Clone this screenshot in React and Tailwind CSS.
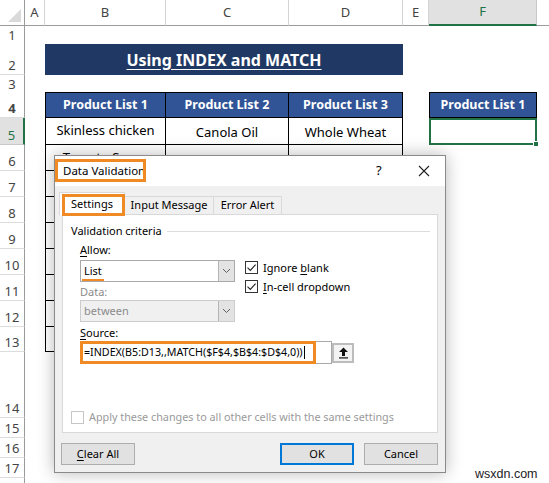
import React from 'react';

const GRID = 'grid grid-cols-[25px_20px_121px_123px_114px_26px_108px_1fr]';
const ORANGE = 'border-[#F08A24]';

const RowHead = ({ n, active }) => (
  <div
    className={
      active
        ? 'flex items-end justify-center border-r-2 border-b border-r-[#217346] border-b-[#c8c8c8] bg-[#e1e1e1] text-[#217346]'
        : 'flex items-end justify-center border-r border-b border-r-[#9b9b9b] border-b-[#dcdcdc] bg-white text-[#444]'
    }
  >
    {n && <span className="h-[18px] text-[13px] leading-[18px]">{n}</span>}
  </div>
);

const ColHead = ({ label, active }) => (
  <div
    className={
      active
        ? 'flex items-center justify-center border-r border-b-2 border-r-[#c8c8c8] border-b-[#217346] bg-[#e1e1e1] text-[#217346]'
        : 'flex items-center justify-center border-r border-b border-r-[#d4d4d4] border-b-[#9b9b9b] bg-white text-[#444]'
    }
  >
    {label}
  </div>
);

const CheckBox = ({ checked, disabled }) => (
  <span
    className={`flex h-[13px] w-[13px] shrink-0 items-center justify-center border bg-white ${
      disabled ? 'border-[#c6c6c6]' : 'border-[#333]'
    }`}
  >
    {checked && (
      <svg width="11" height="11" viewBox="0 0 11 11">
        <path d="M1.5 5.6 L4.3 8.4 L9.6 2.6" fill="none" stroke="#222" strokeWidth="1.1" />
      </svg>
    )}
  </span>
);

const Select = ({ value, disabled, mark }) => (
  <div
    className={`relative flex h-[22px] w-[155px] border ${
      disabled ? 'border-[#cccccc] bg-[#f0f0f0] text-[#8b8b8b]' : 'border-[#a9a9a9] bg-white text-black'
    }`}
  >
    <span className="flex-1 pl-[3px] leading-[20px]">{value}</span>
    {mark && <span className="absolute left-[1px] top-[18px] h-[2px] w-[22px] bg-[#F08A24]" />}
    <span className="flex w-[16px] items-center justify-center border-l border-[#b4b4b4] bg-[#e3e3e3]">
      <svg width="9" height="6" viewBox="0 0 9 6">
        <path d="M1 1 L4.5 4.5 L8 1" fill="none" stroke="#606060" />
      </svg>
    </span>
  </div>
);

const U = ({ children }) => <span className="underline underline-offset-2">{children}</span>;

const Sheet = () => {
  const lower = [6, 7, 8, 9, 10, 11, 12, 13];
  const tail = [15, 16, 17];

  return (
    <div className="font-['Noto_Sans',sans-serif]">
      {/* column headers */}
      <div className={`${GRID} h-[26px] text-[13px]`}>
        <div className="relative border-r border-b border-r-[#9b9b9b] border-b-[#9b9b9b] bg-white">
          <svg className="absolute right-[3px] bottom-[3px]" width="13" height="13" viewBox="0 0 13 13">
            <polygon points="13,0 13,13 0,13" fill="#dadada" />
          </svg>
        </div>
        <ColHead label="A" />
        <ColHead label="B" />
        <ColHead label="C" />
        <ColHead label="D" />
        <ColHead label="E" />
        <ColHead label="F" active />
        <div className="border-b border-b-[#9b9b9b] bg-white" />
      </div>

      {/* 1 */}
      <div className={`${GRID} h-[18px]`}>
        <RowHead n={1} />
      </div>

      {/* 2 - title */}
      <div className={`${GRID} h-[31px]`}>
        <RowHead n={2} />
        <div />
        <div className="col-span-3 flex items-center justify-center bg-[#203864] text-[16px] font-bold text-white">
          <span className="underline underline-offset-[3px]">Using INDEX and MATCH</span>
        </div>
      </div>

      {/* 3 */}
      <div className={`${GRID} h-[17px]`}>
        <RowHead n={3} />
      </div>

      {/* 4 - headers */}
      <div className={`${GRID} h-[26px] text-[12.5px] font-bold text-white`}>
        <RowHead n={4} />
        <div />
        <div className="flex items-center justify-center border border-black bg-[#305496]">Product List 1</div>
        <div className="flex items-center justify-center border-t border-r border-b border-black bg-[#305496]">Product List 2</div>
        <div className="flex items-center justify-center border-t border-r border-b border-black bg-[#305496]">Product List 3</div>
        <div />
        <div className="flex items-center justify-center border border-black bg-[#305496]">Product List 1</div>
      </div>

      {/* 5 */}
      <div className={`${GRID} h-[27px] text-[13px] text-black`}>
        <RowHead n={5} active />
        <div />
        <div className="flex items-center justify-center border-r border-b border-l border-black">Skinless chicken</div>
        <div className="flex items-end justify-center border-r border-b border-black pb-[2px]">Canola Oil</div>
        <div className="flex items-end justify-center border-r border-b border-black pb-[2px]">Whole Wheat</div>
        <div />
        <div className="relative border-2 border-[#217346]">
          <span className="absolute -right-[4px] -bottom-[4px] h-[6px] w-[6px] border border-white bg-[#217346]" />
        </div>
      </div>

      {lower.map((n) => (
        <div key={n} className={`${GRID} ${n === 13 ? 'h-[25px]' : 'h-[26px]'} text-[13px] text-black`}>
          <RowHead n={n} />
          <div />
          <div className="flex items-center justify-center border-r border-b border-l border-black">
            {n === 6 ? 'Tomato Sauce' : ''}
          </div>
          <div className="border-r border-b border-black" />
          <div className="border-r border-b border-black" />
        </div>
      ))}

      <div className={`${GRID} h-[66px]`}>
        <RowHead n={14} />
      </div>

      {tail.map((n) => (
        <div key={n} className={`${GRID} h-[20px]`}>
          <RowHead n={n} />
        </div>
      ))}
      <div className={`${GRID} h-[20px]`}>
        <RowHead />
      </div>
    </div>
  );
};

const Dialog = () => (
  <div className="absolute left-[54px] top-[155px] flex h-[318px] w-[392px] flex-col border border-[#8a8a8a] font-['Noto_Sans',sans-serif] text-[11px] text-black shadow-[0_0_16px_rgba(0,0,0,0.28)]">
    {/* title bar */}
    <div className="relative flex h-[30px] shrink-0 items-center bg-white">
      <span className="pl-[8px] text-[11.5px]">Data Validation</span>
      <span className={`absolute left-[0px] top-[3px] h-[23px] w-[91px] border-[3px] ${ORANGE}`} />
      <span className="absolute left-[321px] top-[5px] text-[13px]">?</span>
      <svg className="absolute left-[363px] top-[9px]" width="12" height="12" viewBox="0 0 12 12">
        <path d="M1 1 L11 11 M11 1 L1 11" stroke="#222" strokeWidth="1.1" />
      </svg>
    </div>

    {/* body */}
    <div className="flex flex-1 flex-col bg-[#f0f0f0] px-[7px] pt-[6px]">
      <div className="-ml-[3px] flex h-[22px] items-end">
        <div className="relative z-10 -mb-px flex h-[23px] w-[66px] items-center justify-center border border-b-0 border-[#d9d9d9] bg-white">
          Settings
          <span className={`absolute left-[2px] top-[1px] h-[22px] w-[63px] border-[3px] ${ORANGE}`} />
        </div>
        <div className="flex h-[18px] w-[89px] items-center justify-center border-t border-r border-[#d9d9d9] bg-[#f0f0f0]">
          Input Message
        </div>
        <div className="flex h-[18px] w-[68px] items-center justify-center border-t border-r border-[#d9d9d9] bg-[#f0f0f0]">
          Error Alert
        </div>
      </div>

      {/* panel */}
      <div className="flex h-[219px] flex-col border border-[#d9d9d9] bg-white">
        <div className="mt-[8px] flex h-[16px] items-center pr-[7px] pl-[8px]">
          <span>Validation criteria</span>
          <span className="ml-[5px] h-px flex-1 bg-[#dcdcdc]" />
        </div>

        <div className="flex flex-col pl-[17px]">
          <div className="mt-[3px] flex h-[16px] items-center">
            <span>
              <U>A</U>llow:
            </span>
          </div>

          <div className="mt-[2px] flex items-start">
            <div className="flex flex-col">
              <Select value="List" mark />
              <div className="mt-[2px] flex h-[16px] items-center text-[#8b8b8b]">Data:</div>
              <Select value="between" disabled />
            </div>
            <div className="mt-[1px] ml-[10px] flex flex-col gap-[6px]">
              <div className="flex h-[13px] items-center gap-[5px] leading-[13px]">
                <CheckBox checked />
                <span>
                  Ignore <U>b</U>lank
                </span>
              </div>
              <div className="flex h-[13px] items-center gap-[5px] leading-[13px]">
                <CheckBox checked />
                <span>
                  <U>I</U>n-cell dropdown
                </span>
              </div>
            </div>
          </div>

          <div className="mt-[3px] flex h-[16px] items-center">
            <span>
              <U>S</U>ource:
            </span>
          </div>

          <div className="flex items-center">
            <div className="relative flex h-[23px] w-[252px] items-center border border-[#a9a9a9] bg-white">
              <span className="pl-[3px] text-[10.7px]">=INDEX(B5:D13,,MATCH($F$4,$B$4:$D$4,0))</span>
              <span className="ml-px h-[13px] w-px bg-black" />
              <span className={`absolute -left-px -top-px h-[23px] w-[236px] border-[3px] ${ORANGE}`} />
            </div>
            <div className="flex h-[20px] w-[22px] items-center justify-center border-2 border-[#bcbcbc] bg-[#f3f3f3]">
              <svg width="11" height="12" viewBox="0 0 11 12">
                <polygon points="5.5,0.5 10,5 7,5 7,9 4,9 4,5 1,5" fill="#111" />
                <rect x="1" y="10.3" width="9" height="1.2" fill="#111" />
              </svg>
            </div>
          </div>
        </div>

        <div className="mt-[45px] flex h-[16px] items-center gap-[5px] pl-[8px] text-[10.8px] text-[#9a9a9a]">
          <CheckBox disabled />
          <span>Apply these changes to all other cells with the same settings</span>
        </div>
      </div>

      {/* buttons */}
      <div className="mt-[10px] flex h-[22px] items-center">
        <div className="-ml-px flex h-[22px] w-[74px] items-center justify-center border border-[#adadad] bg-[#e1e1e1]">
          <span>
            <U>C</U>lear All
          </span>
        </div>
        <div className="ml-auto flex h-[22px] w-[74px] items-center justify-center border-2 border-[#0078d7] bg-[#e1e1e1]">
          OK
        </div>
        <div className="ml-[10px] flex h-[22px] w-[74px] items-center justify-center border border-[#adadad] bg-[#e1e1e1]">
          Cancel
        </div>
      </div>
    </div>
  </div>
);

const App = () => {
  return (
    <div className="relative h-[483px] w-[549px] overflow-hidden bg-white">
      <Sheet />
      <Dialog />
      <span className="absolute left-[475px] top-[465px] font-['Liberation_Sans',Arial,sans-serif] text-[12.5px] text-[#222]">
        wsxdn.com
      </span>
    </div>
  );
};

export default App;
